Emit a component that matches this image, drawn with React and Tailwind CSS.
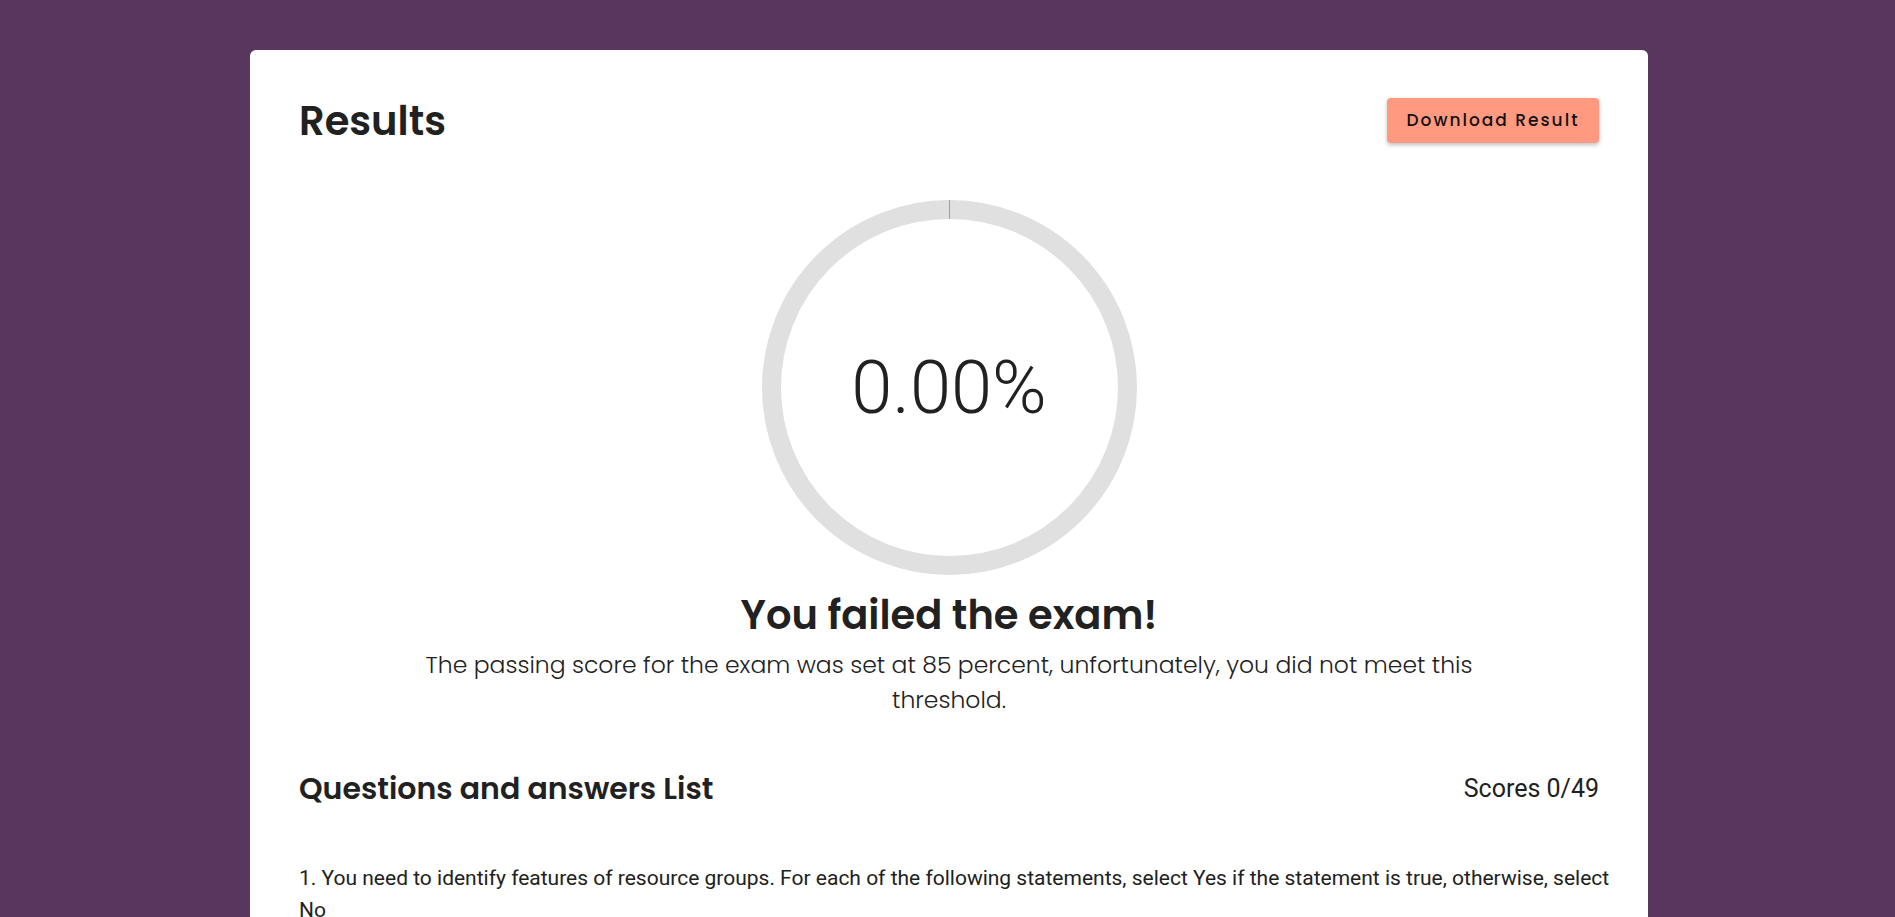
import React from 'react';

const heading = "font-['Poppins','Open_Sans',sans-serif]";
const body = "font-['Roboto','Liberation_Sans',sans-serif]";

const ScoreRing = ({ percent }) => {
  const size = 375;
  const stroke = 19;
  const r = (size - stroke) / 2;
  return (
    <div className="grid place-items-center">
      <svg
        width={size}
        height={size}
        viewBox={`0 0 ${size} ${size}`}
        className="col-start-1 row-start-1"
      >
        <circle cx={size / 2} cy={size / 2} r={r} fill="none" stroke="#e0e0e0" strokeWidth={stroke} />
        <line x1={size / 2} y1="0" x2={size / 2} y2={stroke} stroke="#9e9e9e" strokeWidth="1" />
      </svg>
      <span className={`col-start-1 row-start-1 ${body} text-[74px] font-light leading-none text-[#212121]`}>
        {percent.toFixed(2)}%
      </span>
    </div>
  );
};

export default function App() {
  return (
    <div className="min-h-screen bg-[#59365e] pt-[50px]">
      <div className="ml-[250px] w-[1398px] rounded-md bg-white px-[49px] pt-12 pb-40">
        <div className="flex h-[45px] items-center justify-between">
          <h1 className={`${heading} text-[40px] font-semibold leading-none text-[#212121]`}>Results</h1>
          <button className={`${heading} h-[45px] w-[212px] rounded-[4px] bg-[#ff9a80] text-[17px] font-medium tracking-[2px] text-[#111] shadow-[0_2px_4px_rgba(0,0,0,0.25)]`}>
            Download Result
          </button>
        </div>

        <div className="mt-[57px] flex justify-center">
          <ScoreRing percent={0} />
        </div>

        <div className="mt-4 flex flex-col items-center text-center">
          <h2 className={`${heading} text-[40px] font-semibold leading-[48px] text-[#212121]`}>You failed the exam!</h2>
          <p className={`${heading} mt-2 max-w-[1110px] text-[23.5px] font-light leading-[35px] text-[#212121]`}>
            The passing score for the exam was set at 85 percent, unfortunately, you did not meet this threshold.
          </p>
        </div>

        <div className="mt-[52px] flex items-center justify-between">
          <h3 className={`${heading} text-[30px] font-semibold leading-[40px] text-[#212121]`}>Questions and answers List</h3>
          <span className={`${body} text-[25px] text-[#212121]`}>Scores 0/49</span>
        </div>

        <div className="-mr-3 mt-[53px]">
          <p className={`${body} text-[21px] leading-[32px] text-[#212121]`}>
            1. You need to identify features of resource groups. For each of the following statements, select Yes if the statement is true, otherwise, select No
          </p>
        </div>
      </div>
    </div>
  );
}
